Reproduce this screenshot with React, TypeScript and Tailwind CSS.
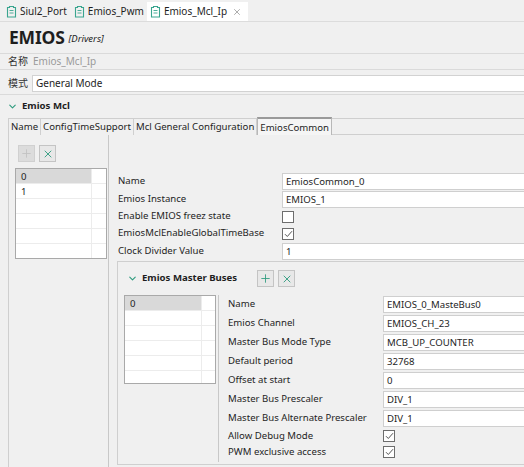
import { ChevronDown, Plus, X } from 'lucide-react'

const FONT = { fontFamily: '"Noto Sans", "Noto Sans CJK SC", sans-serif' }

function FileIcon() {
  return (
    <svg width="11" height="13" viewBox="0 0 11 13" className="shrink-0">
      <path d="M1.5 2.5h2v-1h4v1h2v9.5h-8z" fill="none" stroke="#3aa58f" strokeWidth="1.1" />
      <path d="M3.5 5.5h4M3.5 8h4" stroke="#3aa58f" strokeWidth="0.9" />
    </svg>
  )
}

function Check({ on }: { on?: boolean }) {
  return (
    <div className="w-[12px] h-[12px] bg-white border border-[#6d6d6d] flex items-center justify-center shrink-0">
      {on && (
        <svg width="9" height="8" viewBox="0 0 9 8">
          <path d="M1 4.2l2.3 2.3L8 1.2" fill="none" stroke="#555" strokeWidth="1" />
        </svg>
      )}
    </div>
  )
}

function Field({ value }: { value: string }) {
  return (
    <div className="flex-1 h-[17px] bg-white border border-[#cfcfcf] border-r-0 px-[3px] leading-[15px] whitespace-nowrap">{value}</div>
  )
}

function ToolButtons({ addOn }: { addOn?: boolean }) {
  return (
    <div className="flex gap-[4px]">
      <div className={`w-[17px] h-[17px] border flex items-center justify-center ${addOn ? 'border-[#c4c4c4] bg-[#e8e8e8]' : 'border-[#d0d0d0] bg-[#dcdcdc]'}`}>
        <Plus size={13} strokeWidth={1.6} color={addOn ? '#2e9b7e' : '#c2c2c2'} />
      </div>
      <div className="w-[17px] h-[17px] border border-[#c4c4c4] bg-[#e8e8e8] flex items-center justify-center">
        <X size={12} strokeWidth={1.8} color="#2e9b7e" />
      </div>
    </div>
  )
}

function ListBox({ rows, width, height, selW }: { rows: string[]; width: string; height: string; selW: string }) {
  return (
    <div className={`${width} ${height} bg-white border border-[#a9a9a9] overflow-hidden`}>
      {Array.from({ length: 6 }).map((_, i) => (
        <div key={i} className="flex h-[15px] border-b border-[#ececec]">
          <div className={`${selW} pl-[5px] leading-[15px] ${i === 0 ? 'bg-[#d9d9d9]' : ''}`}>{rows[i] ?? ''}</div>
          <div className="flex-1 border-l border-[#ececec]" />
        </div>
      ))}
    </div>
  )
}

const COMMON: { label: string; value?: string; check?: boolean }[] = [
  { label: 'Name', value: 'EmiosCommon_0' },
  { label: 'Emios Instance', value: 'EMIOS_1' },
  { label: 'Enable EMIOS freez state', check: false },
  { label: 'EmiosMclEnableGlobalTimeBase', check: true },
  { label: 'Clock Divider Value', value: '1' },
]

const BUS: { label: string; value?: string; check?: boolean }[] = [
  { label: 'Name', value: 'EMIOS_0_MasteBus0' },
  { label: 'Emios Channel', value: 'EMIOS_CH_23' },
  { label: 'Master Bus Mode Type', value: 'MCB_UP_COUNTER' },
  { label: 'Default period', value: '32768' },
  { label: 'Offset at start', value: '0' },
  { label: 'Master Bus Prescaler', value: 'DIV_1' },
  { label: 'Master Bus Alternate Prescaler', value: 'DIV_1' },
  { label: 'Allow Debug Mode', check: true },
  { label: 'PWM exclusive access', check: true },
]

export default function App() {
  return (
    <div className="w-[524px] h-[467px] bg-[#f0f0f0] overflow-hidden text-[9.6px] text-[#1e1e1e] flex flex-col" style={FONT}>
      {/* Editor tabs */}
      <div className="h-[22px] flex items-end border-b border-[#dcdcdc] shrink-0 whitespace-nowrap text-[10px]">
        <div className="flex items-center gap-[3px] pl-[6px] pr-[6px] h-[19px]">
          <FileIcon />
          <span>Siul2_Port</span>
        </div>
        <div className="flex items-center gap-[3px] px-[1px] h-[19px]">
          <FileIcon />
          <span>Emios_Pwm</span>
        </div>
        <div className="flex items-center gap-[3px] pl-[3px] pr-[6px] h-[19px] bg-white ml-[2px]">
          <FileIcon />
          <span>Emios_Mcl_Ip</span>
          <X size={10} strokeWidth={1.3} color="#666" className="ml-[2px]" />
        </div>
      </div>

      {/* Header */}
      <div className="h-[31px] flex items-center pl-[9px] gap-[4px] shrink-0">
        <span className="text-[17.5px] font-bold tracking-[-0.2px]">EMIOS</span>
        <span className="text-[9.5px] italic mt-[4px]">[Drivers]</span>
      </div>

      {/* 名称 / 模式 */}
      <div className="h-[17px] flex items-center shrink-0 border-y border-[#dadada] whitespace-nowrap text-[10px]">
        <span className="pl-[8px] w-[31px] shrink-0 text-[#333]">名称</span>
        <span className="pl-[2px] text-[#9a9a9a]">Emios_Mcl_Ip</span>
      </div>
      <div className="h-[22px] flex items-center pt-[4px] shrink-0 whitespace-nowrap text-[10px]">
        <span className="pl-[8px] w-[32px] shrink-0 text-[#333]">模式</span>
        <div className="flex-1 h-[17px] bg-white border-y border-l border-[#d2d2d2] pl-[3px] leading-[15px]">General Mode</div>
      </div>
      <div className="h-[3px] border-b border-[#dadada] shrink-0" />

      {/* Section */}
      <div className="h-[17px] flex items-center pl-[7px] gap-[4px] mt-[3px] shrink-0">
        <ChevronDown size={11} strokeWidth={2.4} color="#2e9b7e" />
        <span className="font-bold">Emios Mcl</span>
      </div>

      <div className="ml-[8px] mt-[2px] flex-1 flex flex-col whitespace-nowrap">
        {/* inner tabs */}
        <div className="flex h-[18px] items-end">
          {['Name', 'ConfigTimeSupport', 'Mcl General Configuration'].map((t, i) => (
            <div key={t} className={`h-[17px] px-[2px] leading-[16px] border-t border-r border-[#cfcfcf] ${i === 0 ? 'border-l' : ''}`}>{t}</div>
          ))}
          <div className="h-[18px] px-[2px] leading-[17px] border-t-2 border-x border-[#b8b8b8] border-t-[#9a9a9a] bg-[#f5f5f5]">EmiosCommon</div>
          <div className="flex-1 h-[17px] border-t border-b border-[#cfcfcf]" />
        </div>

        <div className="flex-1 flex border-l border-[#cfcfcf]">
          {/* left list */}
          <div className="w-[100px] shrink-0 border-r border-[#c8c8c8] pl-[6px] pt-[10px] flex flex-col gap-[6px]">
            <div className="pl-[3px]"><ToolButtons /></div>
            <ListBox rows={['0', '1']} width="w-[92px]" height="h-[91px]" selW="w-[75px]" />
          </div>

          {/* right side */}
          <div className="flex-1 pl-[8px] pt-[37px] flex flex-col">
            <div className="flex flex-col">
              {COMMON.map((r) => (
                <div key={r.label} className={`flex items-center ${r.check !== undefined ? 'h-[17px]' : 'h-[18px]'}`}>
                  <span className="w-[165px] shrink-0 pl-[1px]">{r.label}</span>
                  {r.check !== undefined ? <Check on={r.check} /> : <Field value={r.value!} />}
                </div>
              ))}
            </div>

            {/* Master buses group */}
            <div className="mt-[1px] h-[204px] border-l border-y border-[#cfcfcf] pl-[6px] flex flex-col">
              <div className="h-[33px] flex items-center gap-[4px] pl-[3px]">
                <ChevronDown size={11} strokeWidth={2.4} color="#2e9b7e" />
                <span className="font-bold w-[111px] shrink-0">Emios Master Buses</span>
                <ToolButtons addOn />
              </div>
              <div className="flex">
                <div className="w-[94px] shrink-0">
                  <ListBox rows={['0']} width="w-[92px]" height="h-[89px]" selW="w-[76px]" />
                </div>
                <div className="flex-1 border-l border-[#c8c8c8] pl-[9px] h-[167px]">
                  {BUS.map((r) => (
                    <div key={r.label} className={`flex items-center ${r.check !== undefined ? 'h-[16px]' : 'h-[19px]'}`}>
                      <span className="w-[155px] shrink-0">{r.label}</span>
                      {r.check !== undefined ? <Check on={r.check} /> : <Field value={r.value!} />}
                    </div>
                  ))}
                </div>
              </div>
            </div>
          </div>
        </div>
      </div>
    </div>
  )
}
